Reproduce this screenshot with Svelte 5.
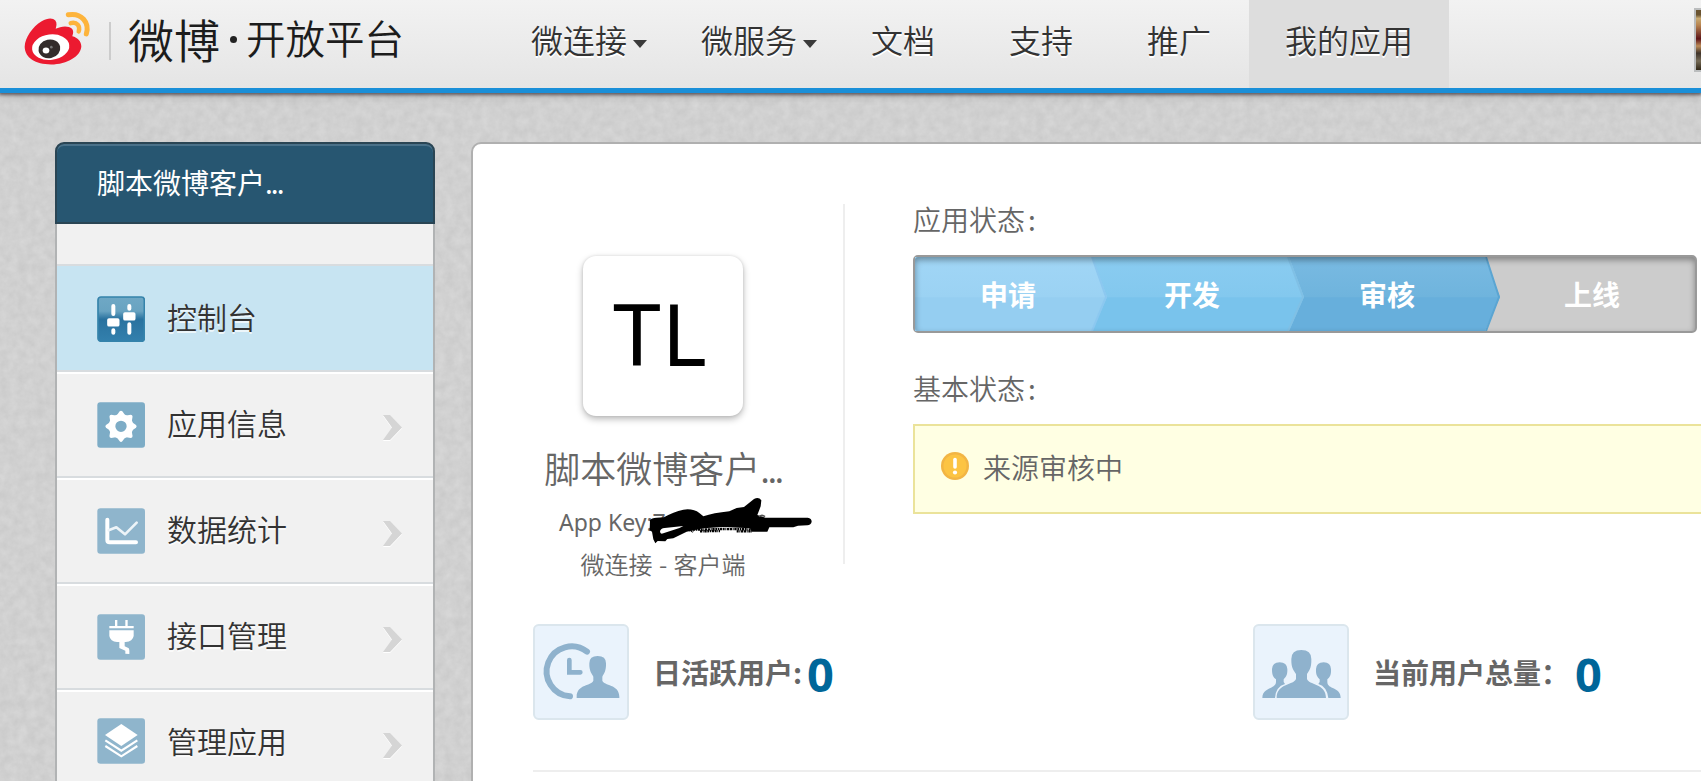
<script>
  const nav = [
    { label: '微连接', caret: true },
    { label: '微服务', caret: true },
    { label: '文档' },
    { label: '支持' },
    { label: '推广' },
    { label: '我的应用', active: true }
  ];
  const menu = [
    { label: '控制台', icon: 'sliders', active: true },
    { label: '应用信息', icon: 'gear' },
    { label: '数据统计', icon: 'chart' },
    { label: '接口管理', icon: 'plug' },
    { label: '管理应用', icon: 'layers' }
  ];
  const steps = ['申请', '开发', '审核', '上线'];
  const teeth = [0, 45, 90, 135, 180, 225, 270, 315];
</script>

<div class="page">
  <svg class="grain" width="1701" height="781" aria-hidden="true">
    <filter id="grain" x="0" y="0" width="100%" height="100%" color-interpolation-filters="sRGB">
      <feTurbulence type="fractalNoise" baseFrequency="0.11" numOctaves="4" seed="4" />
      <feColorMatrix values="0.07 0 0 0 0.782  0.07 0 0 0 0.782  0.07 0 0 0 0.782  0 0 0 0 1" />
    </filter>
    <rect width="1701" height="781" filter="url(#grain)" />
  </svg>

  <header>
    <div class="brand">
      <svg class="logo" viewBox="70 30 210 170">
        <path d="M75 140C76 112 98 80 126 63C145 52 160 53 167 61C173 69 170 78 168 86C183 78 206 75 217 86C223 94 220 102 218 108C234 112 245 123 245 139C243 168 203 193 154 193C107 193 76 173 75 140Z" fill="#ec1a30" />
        <ellipse cx="153" cy="141" rx="56" ry="38" fill="#fff" transform="rotate(-7 153 141)" />
        <ellipse cx="149" cy="146" rx="33" ry="28" fill="#332c2b" transform="rotate(-12 149 146)" />
        <ellipse cx="139" cy="151" rx="10" ry="9" fill="#fff" />
        <circle cx="155" cy="141" r="4" fill="#777" />
        <path d="M206 44C246 37 270 67 260 101" fill="none" stroke="#fdb43c" stroke-width="15" stroke-linecap="round" />
        <path d="M213 69C232 64 243 78 237 94" fill="none" stroke="#fdb43c" stroke-width="13" stroke-linecap="round" />
      </svg>
      <span class="sep"></span>
      <span class="b1">微博</span><span class="dot"></span><span class="b2">开放平台</span>
    </div>
    <nav>
      {#each nav as n}
        <a class:active={n.active}>{n.label}{#if n.caret}<i class="caret"></i>{/if}</a>
      {/each}
    </nav>
    <div class="avatar"></div>
  </header>

  <div class="body">
    <aside>
      <h2>脚本微博客户<span class="dots">...</span></h2>
      <ul>
        {#each menu as m}
          <li class:active={m.active}>
            <svg class="ico {m.icon}" viewBox="0 0 144 138">
              {#if m.icon === 'sliders'}
                <defs>
                  <linearGradient id="sl" x1="0" y1="0" x2="0" y2="1">
                    <stop offset="0" stop-color="#6fa8c5" /><stop offset=".32" stop-color="#68a3c1" />
                    <stop offset=".5" stop-color="#29729f" /><stop offset="1" stop-color="#3380ad" />
                  </linearGradient>
                </defs>
                <rect x="3" y="3" width="139" height="133" rx="9" fill="url(#sl)" stroke="#3583ab" stroke-width="5" />
                <g stroke="#fff" stroke-width="12" stroke-linecap="round" fill="#fff">
                  <path d="M49 30V54M49 103V110M97 30V38M97 85V110" />
                  <rect x="34" y="70" width="30" height="18" rx="2" stroke-width="7" />
                  <rect x="82" y="52" width="30" height="18" rx="2" stroke-width="7" />
                </g>
              {:else}
                <rect x="1" y="1" width="143" height="136" rx="9" fill={m.icon === 'gear' ? '#7dacc6' : '#8fb5cc'} />
              {/if}
              {#if m.icon === 'gear'}
                <circle cx="72" cy="73" r="27" fill="none" stroke="#fff" stroke-width="20" />
                {#each teeth as t}
                  <path d="M58 42L68 28Q72 24 76 28L86 42Z" fill="#fff" transform="rotate({t} 72 73)" />
                {/each}
              {:else if m.icon === 'chart'}
                <g fill="none" stroke="#fff" stroke-linejoin="round" stroke-linecap="round">
                  <path d="M31 35V96Q31 103 38 103H117" stroke-width="12" />
                  <path d="M35 67L58 58L84 79L119 44" stroke-width="8" stroke="#edf4f8" />
                </g>
              {:else if m.icon === 'plug'}
                <path d="M37 36H54V18H61V36H85V18H92V36H110V43H37ZM37 49H110V66Q107 83 86 84H83V97L94 102Q98 104 97 120L85 119V110L67 102V84H60Q40 83 37 66Z" fill="#fff" />
              {:else if m.icon === 'layers'}
                <path d="M73 18L122 51L73 84L24 51Z" fill="#fff" />
                <path d="M25 67L73 98L121 67M25 84L73 115L121 84" fill="none" stroke="#fff" stroke-width="6.5" />
              {/if}
            </svg>
            <span>{m.label}</span>
            {#if !m.active}
              <svg class="chev" viewBox="0 0 19 25"><path d="M0 0H7L19 12.5L7 25H0L9 12.5Z" fill="#d5d5d5" /></svg>
            {/if}
          </li>
        {/each}
      </ul>
    </aside>

    <main>
      <section class="top">
        <div class="app">
          <div class="tile">TL</div>
          <div class="name">脚本微博客户<span class="dots">...</span></div>
          <div class="key"><span>App Key:7</span>
            <svg class="mask" viewBox="0 0 540 180">
              <path d="M30 88Q34 80 50 80L72 79Q100 62 130 56Q160 52 178 66L190 76Q220 66 268 61L290 51L312 48L342 24Q356 16 364 28L362 46L352 72L376 80L503 80Q515 82 515 92Q513 102 502 103L474 104L460 109H388L382 122H335L330 112L250 108L190 112L140 122L100 142L82 144L76 151L53 150L46 157L40 145L36 122L29 118Z" fill="#000" />
              <path d="M60 121Q62 112 74 111L130 105Q120 112 100 117L70 127Q60 131 60 121Z" fill="#fff" />
              <path d="M146 116L160 122M160 116L250 114L332 115M180 121L240 120M290 121H336" fill="none" stroke="#000" stroke-width="7" stroke-dasharray="6 2 3 2 7 2" />
              <path d="M357 77Q366 69 375 77" fill="none" stroke="#555" stroke-width="5" />
            </svg>
          </div>
          <div class="kind">微连接 - 客户端</div>
        </div>
        <div class="rule"></div>
        <div class="status">
          <h3>应用状态<b class="colon">:</b></h3>
          <div class="steps">
            {#each steps as s, i}
              <div class="step s{i + 1}">{s}</div>
            {/each}
            <svg class="edges" viewBox="0 0 780 74" fill="none" stroke-width="2">
              <path d="M177 0L191 40L177 74" stroke="#8cc8f0" /><path d="M373 0L388 40L373 74" stroke="#80c0e5" />
              <path d="M571 0L584 40L571 74" stroke="#5ba5d2" />
            </svg>
          </div>
          <h3 class="second">基本状态<b class="colon">:</b></h3>
          <div class="notice">
            <svg viewBox="0 0 28 28">
              <circle cx="14" cy="14" r="14" fill="#f2b544" /><circle cx="14" cy="14" r="11.5" fill="#fcc443" />
              <path d="M14 7.5V15" stroke="#fff" stroke-width="3.6" stroke-linecap="round" /><circle cx="14" cy="20.5" r="2.1" fill="#fff" />
            </svg>
            <span>来源审核中</span>
          </div>
        </div>
      </section>

      <section class="stats">
        <div class="stat">
          <svg viewBox="0 0 288 288">
            <rect x="3" y="3" width="282" height="282" rx="14" fill="#eaf3fc" stroke="#dbe6ed" stroke-width="6" />
            <path d="M162 83A75 75 0 1 0 111 217" fill="none" stroke="#8fb2cd" stroke-width="18" stroke-linecap="round" />
            <path d="M109 108V145H142" fill="none" stroke="#8fb2cd" stroke-width="14" stroke-linecap="round" />
            <path d="M194 96Q219 96 219 118C220 142 212 150 208 158V170C212 185 259 180 259 218V222H131V218C131 180 177 185 181 170V158C177 150 168 142 169 118Q169 96 194 96Z" fill="#8fb2cd" />
          </svg>
          <strong>日活跃用户:</strong><em>0</em>
        </div>
        <div class="stat two">
          <svg viewBox="0 0 288 288">
            <rect x="3" y="3" width="282" height="282" rx="14" fill="#eaf3fc" stroke="#dbe6ed" stroke-width="6" />
            <g fill="#8fb2cd">
              <path d="M80 115Q102 116 103 135C104 154 98 160 92 166V174L96 180Q68 188 66 222H28C28 188 68 197 69 174V166C61 160 57 154 57 135Q58 116 80 115Z" />
              <path d="M212 115Q190 116 189 135C188 154 194 160 200 166V174L196 180Q222 188 226 222H263C263 188 223 197 223 174V166C230 160 235 154 234 135Q233 116 212 115Z" />
              <path d="M145 78Q175 78 175 105C176 133 167 142 162 150V164C166 184 219 176 219 222H71C71 176 124 184 129 164V150C124 142 114 133 115 105Q115 78 145 78Z" />
            </g>
          </svg>
          <strong>当前用户总量：</strong><em>0</em>
        </div>
      </section>
    </main>
  </div>
</div>

<style>
  :global(body) { margin: 0; overflow: hidden; }
  .page {
    position: relative; width: 1701px; height: 781px; overflow: hidden; background: #d0d0d0;
    font-family: "Noto Sans CJK SC", "Noto Sans", sans-serif; color: #333; font-weight: 350;
  }
  .grain { position: absolute; left: 0; top: 0; }
  header {
    position: relative; display: flex; box-sizing: border-box; height: 93px; border-bottom: 5px solid #1a8fd8;
    background: linear-gradient(#f2f2f2, #e6e6e6 90%, #e5e5e5); box-shadow: 0 1px 3px 1px rgba(50, 40, 45, .65), 0 4px 8px rgba(0, 0, 0, .12);
  }
  .brand { display: flex; flex: none; box-sizing: border-box; width: 495px; padding-left: 23px; color: #1c1c1c; white-space: nowrap; }
  .logo { width: 70px; height: 57px; margin-top: 10px; }
  .sep { width: 2px; height: 38px; margin: 22px 17px 0 16px; background: #ccc; }
  .b1 { font-size: 46px; line-height: 76px; }
  .dot { width: 7px; height: 7px; border-radius: 50%; background: #222; margin: 36px 9px 0 10px; }
  .b2 { font-size: 39.5px; line-height: 74px; }
  nav { display: flex; flex: none; gap: 2px; }
  nav a {
    position: relative; padding: 0 36px; font-size: 32px; line-height: 79px; height: 88px;
    text-shadow: 0 2px 0 #fff; white-space: nowrap;
  }
  nav a.active { background: #dddddd; }
  .caret { position: absolute; right: 16px; top: 40px; border: 7px solid transparent; border-top: 8px solid #3a3a3a; border-bottom: 0; }
  .avatar {
    box-sizing: border-box; width: 64px; height: 64px; margin: 8px 0 0 245px; flex: none; border: 2px solid #bbbdbe;
    background: linear-gradient(#6a5330 8%, #c8aa72 14%, #b98550 25%, #5e1418 48%, #bd8c58 60%, #40342a 72%, #756a55 85%, #322818);
  }

  .body { position: relative; display: flex; align-items: flex-start; gap: 36px; padding: 49px 0 0 55px; }
  aside { flex: none; width: 380px; }
  h2 {
    box-sizing: border-box; height: 82px; margin: 0; padding-left: 40px; border: 2px solid #2a4554; border-radius: 9px 9px 0 0;
    background: #275671; box-shadow: inset 0 2px 0 #4a7189; color: #fff; font-size: 28px; font-weight: 400; line-height: 77px;
  }
  .dots { letter-spacing: -.07em; }
  ul { list-style: none; margin: 0; padding: 40px 0 0; border: solid #b1b3b4; border-width: 0 2px; background: #f1f1f1; }
  li {
    display: flex; align-items: flex-start; box-sizing: border-box; height: 106px; padding: 30px 0 0 39.5px;
    border-bottom: 2px solid #d8dcdf; box-shadow: inset 0 2px 0 #fff; font-size: 30px;
  }
  li.active { height: 108px; border-top: 2px solid #d8dcdf; background: #c7e4f2; box-shadow: none; }
  .ico { width: 48px; height: 46px; flex: none; }
  .layers { margin-top: -2px; }
  li span { flex: 1; margin-left: 22.5px; line-height: 40px; text-shadow: 0 2px 0 rgba(255, 255, 255, .7); }
  .chev { width: 19px; height: 25px; margin: 13px 31.5px 0 0; filter: drop-shadow(0 1px 0 #fff); }

  main {
    flex: none; box-sizing: border-box; width: 1400px; height: 700px; border: 2px solid #b0b0b0;
    border-radius: 10px; background: #fff; color: #666;
  }
  .top { display: flex; align-items: flex-start; height: 480px; }
  .app { display: flex; flex-direction: column; align-items: center; width: 360px; margin-left: 10px; padding-top: 112px; white-space: nowrap; }
  .tile {
    width: 160px; height: 160px; border-radius: 13px; box-shadow: 0 3px 7px rgba(0, 0, 0, .28), 0 0 3px rgba(0, 0, 0, .1);
    color: #000; font: 400 86px/153px "Noto Sans", sans-serif; letter-spacing: 1px; text-indent: 30px; background: #fff;
  }
  .name { margin-top: 26px; font-size: 36px; line-height: 51px; height: 52px; }
  .key { position: relative; width: 208px; height: 42px; margin-top: 7px; font: 400 23px/42px "Noto Sans", sans-serif; }
  .mask { position: absolute; left: 81px; top: -10px; width: 180px; height: 60px; }
  .kind { font-size: 24px; line-height: 42px; word-spacing: 1px; }
  .rule { width: 2px; height: 360px; margin-top: 60px; background: #eee; }
  .status { padding: 54px 0 0 68px; flex: 1; }
  h3 { margin: 0; font-size: 28px; line-height: 42px; height: 42px; font-weight: 350; }
  .colon { font-weight: 400; margin-left: 3px; }
  .steps {
    position: relative; display: flex; box-sizing: border-box; width: 784px; height: 78px; margin-top: 15px;
    border: 2px solid #999; border-radius: 5px; background: #ccc;
  }
  .steps::after { content: ""; position: absolute; inset: 0; z-index: 6; box-shadow: inset 0 3px 6px rgba(0, 0, 0, .36); border-radius: 3px; }
  .step {
    position: relative; box-sizing: border-box; width: 211px; margin-right: -15px; padding-left: 71px; color: #fff; font-size: 28px; font-weight: 700;
    line-height: 75px; clip-path: polygon(0 0, calc(100% - 15px) 0, 100% 40px, calc(100% - 15px) 100%, 0 100%);
  }
  .s1 { z-index: 4; width: 192px; margin-right: -14px; padding-left: 65px; background: linear-gradient(#a1d6f6, #9bd2f3 54%, #95cef1 55%); }
  .s2 { z-index: 3; background: linear-gradient(#8accf1, #83c8ee 54%, #79c3ec 55%); }
  .s3 { z-index: 2; padding-left: 70px; background: linear-gradient(#79bae2, #6fb4dd 54%, #67afdc 55%); }
  .s4 { padding-left: 79px; clip-path: none; }
  .edges { position: absolute; left: 0; top: 0; z-index: 5; width: 780px; height: 74px; }
  .second { margin-top: 34px; }
  .notice {
    display: flex; box-sizing: border-box; height: 90px; margin-top: 15px; padding: 26px 0 0 26px;
    border: 2px solid #ebe39a; background: #ffffe3; font-size: 28px;
  }
  .notice svg { width: 28px; height: 28px; }
  .notice span { margin-left: 14px; line-height: 31px; }

  .stats { display: flex; margin-left: 60px; height: 146px; border-bottom: 2px solid #eee; }
  .stat { display: flex; flex: none; width: 720px; }
  .stat svg { flex: none; width: 96px; height: 96px; }
  strong { margin-left: 24px; font: 700 28px/97px "Noto Sans CJK SC", sans-serif; white-space: nowrap; }
  em { margin-left: 5px; color: #069; font: 700 47px/101px "Noto Sans", sans-serif; }
  .two em { margin-left: 6px; }
</style>
